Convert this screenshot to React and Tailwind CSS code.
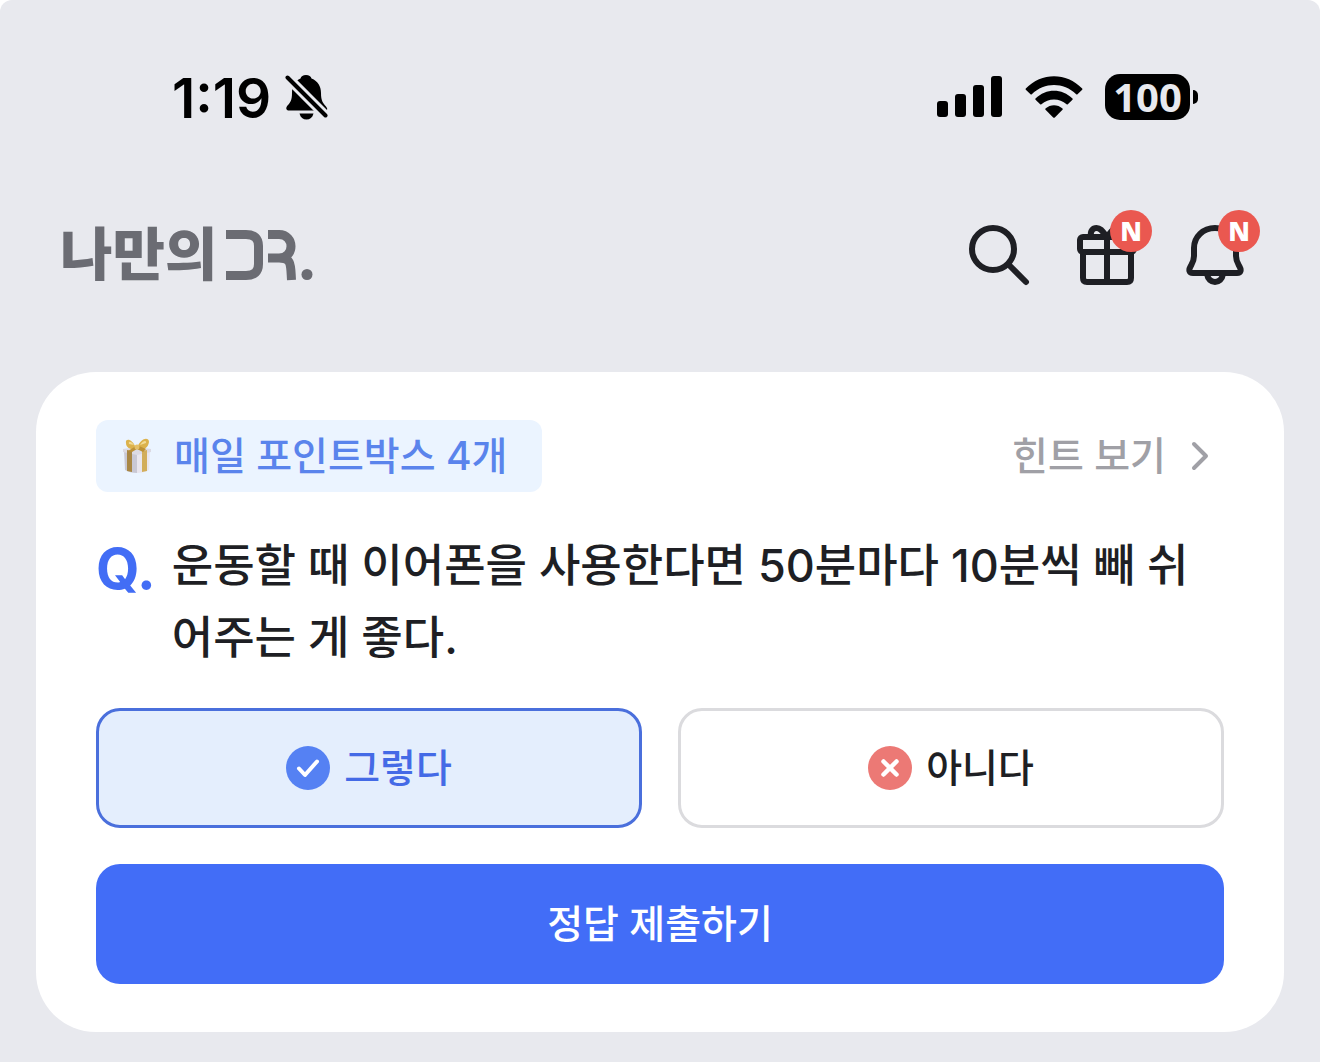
import { useState } from "react";

function BellSlash() {
  return (
    <svg width="44" height="46" viewBox="0 0 44 46" aria-hidden="true">
      <defs>
        <mask id="slash-gap">
          <rect width="44" height="46" fill="white" />
          <path d="M-1 0L45 46" stroke="black" strokeWidth="10" />
        </mask>
      </defs>
      <g mask="url(#slash-gap)">
        <path d="M21 1C24 1 26 2.500 26.500 4.500C33 7 36 12.500 36 19C36 27 38 29 41 32.500C43 35 42.500 36.500 40 36.500H4C1 36.500 0.500 34 2.500 31.500C5.500 28.500 7 26 7 19C7 12 10 7 15.500 4.500C16 2.500 18 1 21 1Z" />
        <path d="M14.500 39.500H28.500C27.500 43.500 25 45.500 21.500 45.500S15.500 43.500 14.500 39.500Z" />
      </g>
      <path d="M2.500 3.500L40.500 41.500" stroke="black" strokeWidth="4" strokeLinecap="round" />
    </svg>
  );
}

function Signal() {
  return (
    <svg width="66" height="42" viewBox="0 0 66 42" aria-hidden="true">
      <rect x="0" y="25" width="11" height="16" rx="3" />
      <rect x="18" y="18" width="11" height="23" rx="3" />
      <rect x="36" y="9" width="11" height="32" rx="3" />
      <rect x="54" y="0" width="11" height="41" rx="3" />
    </svg>
  );
}

function Wifi() {
  return (
    <svg width="58" height="43" viewBox="0 0 58 43" aria-hidden="true">
      <path d="M0.800 12.500C16.500 -4 41.500 -4 57.200 12.500Q57.600 13.200 57.200 13.800L52.500 18.200Q51.800 18.700 51.200 18.200C38.500 6 19.500 6 6.800 18.200Q6.200 18.700 5.500 18.200L0.800 13.800Q0.400 13.200 0.800 12.500Z" />
      <path d="M10.500 22.500C21 12 37 12 47.500 22.500Q48 23.100 47.500 23.700L42.800 28.300Q42.200 28.700 41.600 28.300C34.500 22 23.500 22 16.400 28.300Q15.800 28.700 15.200 28.300L10.500 23.700Q10 23.100 10.500 22.500Z" />
      <path d="M20.500 32.500C25.300 28 32.700 28 37.500 32.500Q38 33.100 37.500 33.700L29.800 41.500Q29 42.200 28.200 41.500L20.500 33.700Q20 33.100 20.500 32.500Z" />
    </svg>
  );
}

function StatusBar() {
  return (
    <div className="flex h-[46px] items-center justify-between pl-[172px] pr-[122px]">
      <div className="flex items-center gap-[14px]">
        <span className="pt-[2px] text-[55px] font-semibold leading-[46px] text-black">1:19</span>
        <BellSlash />
      </div>
      <div className="flex items-center gap-[22px]">
        <Signal />
        <Wifi />
        <div className="flex items-center gap-[3px]">
          <div className="flex h-[46px] w-[85px] items-center justify-center rounded-[15px] bg-black font-['Noto_Sans'] text-[40px] font-bold leading-[44px] text-[#e8e9ee]">
            100
          </div>
          <div className="h-[14px] w-[5px] rounded-r-full bg-black" />
        </div>
      </div>
    </div>
  );
}

function Logo() {
  return (
    <a href="#home" aria-label="나만의 DR." className="flex items-center gap-[9px] text-[#6b6c73]">
      <span className="text-[57px] font-black leading-[60px]">나만의</span>
      <svg width="88" height="56" viewBox="0 0 88 56" fill="none" stroke="currentColor" strokeWidth="9" aria-hidden="true">
        <path d="M0 7.500H20Q32.500 7.500 32.500 19V37Q32.500 48.500 20 48.500H0" />
        <path d="M42 7.500H53C69 7.500 69 31 53 31H42M53 31C66 31 64.500 38 65.500 53" />
        <circle cx="81" cy="47.500" r="5.500" fill="currentColor" stroke="none" />
      </svg>
    </a>
  );
}

function IconButton({ label, isNew, children }) {
  return (
    <button type="button" aria-label={label} className="relative size-[72px] text-[#1e1f24]">
      <svg width="72" height="72" viewBox="0 0 72 72" fill="none" stroke="currentColor" strokeWidth="6" strokeLinecap="round" strokeLinejoin="round" aria-hidden="true">
        {children}
      </svg>
      {isNew && (
        <span className="absolute -right-[9px] -top-[9px] flex size-[42px] items-center justify-center rounded-full bg-[#ea5850] font-['Open_Sans'] text-[26px] font-extrabold leading-none text-white">
          N
        </span>
      )}
    </button>
  );
}

function Header() {
  return (
    <header className="flex items-center justify-between pl-[60px] pr-[69px]">
      <Logo />
      <div className="flex gap-9">
        <IconButton label="검색">
          <circle cx="30" cy="30" r="21" />
          <path d="M46 46L63 63" />
        </IconButton>
        <IconButton label="선물" isNew>
          <path d="M12 33V59Q12 63 16 63H56Q60 63 60 59V33M36 18V63" />
          <rect x="9" y="18" width="54" height="15" rx="3" />
          <path d="M20 17C19 12 22 9 25.500 9C30 9 32 13 36 18C40 13 42 9 46.500 9C50 9 53 12 52 17" />
        </IconButton>
        <IconButton label="알림" isNew>
          <path d="M36 9C24 9 15 18 15 29V37C15 42 13.500 44 11.500 47.500C9.500 51 10 54 14 54H58C62 54 62.500 51 60.500 47.500C58.500 44 57 42 57 37V29C57 18 48 9 36 9Z" />
          <path d="M28 55C29.500 65.500 42.500 65.500 44 55" />
        </IconButton>
      </div>
    </header>
  );
}

function GiftBox() {
  return (
    <svg width="30" height="36" viewBox="0 0 30 36" aria-hidden="true">
      <path d="M2 12L15 14V35Q8 35 3 32Z" fill="#c9c8d4" />
      <path d="M15 14L28 12L27 32Q22 35 15 35Z" fill="#e9e6ee" />
      <path d="M1 11L15 9L29 11V14L15 17L1 14Z" fill="#dcdae3" />
      <path d="M5 12L10 13V34L5 33Z" fill="#a98745" />
      <path d="M20 13L25 12V33L20 34Z" fill="#d2ad5a" />
      <path d="M14 10C10 0 3 0 4 5C4 10 9 12 14 11ZM15 10C19 -1 27 -1 27 4C26 11 20 13 15 11Z" fill="#dcb24c" />
      <path d="M12 7C9 3 6 3 7 6ZM18 7C21 2 25 2 24 5Z" fill="#f3dc95" />
      <path d="M14 8L6 13L10 14L15 11L21 14L24 11L17 8Z" fill="#bd9136" />
      <circle cx="15" cy="9" r="2.500" fill="#e4c068" />
    </svg>
  );
}

function CheckMark() {
  return (
    <svg width="44" height="44" viewBox="0 0 44 44" fill="none" stroke="white" strokeWidth="4" strokeLinecap="round" strokeLinejoin="round" aria-hidden="true">
      <circle cx="22" cy="22" r="22" fill="#5581f3" stroke="none" />
      <path d="M13 22.500L19 29L31 15.500" />
    </svg>
  );
}

function CrossMark() {
  return (
    <svg width="44" height="44" viewBox="0 0 44 44" fill="none" stroke="white" strokeWidth="4.500" strokeLinecap="round" aria-hidden="true">
      <circle cx="22" cy="22" r="22" fill="#ec7975" stroke="none" />
      <path d="M15.500 15.500L28.500 28.500M28.500 15.500L15.500 28.500" />
    </svg>
  );
}

function Choice({ selected, onClick, icon, children }) {
  const look = selected
    ? "border-[#4a6fdc] bg-[#e4eefd] text-[#446ae6]"
    : "border-[#dbdbde] bg-white text-[#1e1f24]";
  return (
    <button
      type="button"
      aria-pressed={selected}
      onClick={onClick}
      className={`flex h-[120px] flex-1 items-center justify-center gap-[14px] rounded-3xl border-[3px] text-[39px] font-medium leading-[48px] ${look}`}
    >
      {icon}
      <span>{children}</span>
    </button>
  );
}

function QuizCard() {
  const [answer, setAnswer] = useState("yes");
  return (
    <main className="mx-9 rounded-[60px] bg-white px-[60px] py-12">
      <div className="flex items-center justify-between">
        <div className="flex h-[72px] items-center gap-[22px] rounded-xl bg-[#ebf4ff] pl-[26px] pr-[35px] text-[39px] font-medium leading-[48px] text-[#5a84ec]">
          <GiftBox />
          <span>매일 포인트박스 4개</span>
        </div>
        <button type="button" className="flex items-center gap-6 pr-[14px] text-[39px] font-medium leading-[48px] text-[#a0a0a6]">
          <span>힌트 보기</span>
          <svg width="20" height="32" viewBox="0 0 20 32" fill="none" stroke="currentColor" strokeWidth="4" strokeLinecap="round" strokeLinejoin="round" aria-hidden="true">
            <path d="M4 4L16 16L4 28" />
          </svg>
        </button>
      </div>
      <div className="mt-[38px] flex gap-4 pr-3">
        <span className="text-[56px] font-bold leading-[78px] text-[#426df5]">Q.</span>
        <p className="flex-1 break-all text-[45px] font-medium leading-[72px] text-[#1e1f24]">
          운동할 때 이어폰을 사용한다면 50분마다 10분씩 빼 쉬어주는 게 좋다.
        </p>
      </div>
      <div className="mt-[34px] flex gap-9">
        <Choice selected={answer === "yes"} onClick={() => setAnswer("yes")} icon={<CheckMark />}>
          그렇다
        </Choice>
        <Choice selected={answer === "no"} onClick={() => setAnswer("no")} icon={<CrossMark />}>
          아니다
        </Choice>
      </div>
      <button type="button" className="mt-9 h-[120px] w-full rounded-3xl bg-[#426df7] text-[39px] font-medium leading-[48px] text-white">
        정답 제출하기
      </button>
    </main>
  );
}

export default function App() {
  return (
    <div className="min-h-screen bg-white font-['Inter','Noto_Sans_CJK_KR',sans-serif]">
      <div className="flex min-h-screen flex-col rounded-t-xl bg-[#e8e9ee] pb-[30px] pt-[74px]">
        <StatusBar />
        <div className="mb-[81px] mt-[99px]">
          <Header />
        </div>
        <QuizCard />
      </div>
    </div>
  );
}
